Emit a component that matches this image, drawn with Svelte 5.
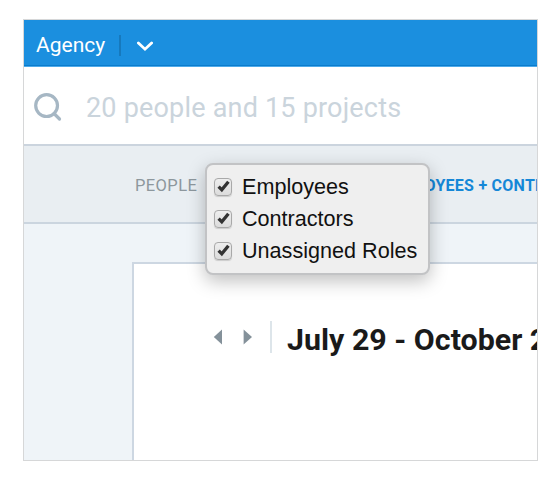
<script lang="ts">
	let query = $state('20 people and 15 projects');
	let filters = $state([
		{ label: 'Employees', checked: true },
		{ label: 'Contractors', checked: true },
		{ label: 'Unassigned Roles', checked: true }
	]);
</script>

<div class="frame">
	<header class="topbar">
		<span class="org">Agency</span>
		<span class="split"></span>
		<svg class="chevron" width="16" height="11" viewBox="0 0 16 11">
			<path d="M1.4 2 L8 8.2 L14.6 2" fill="none" stroke="#fff" stroke-width="2.8" stroke-linecap="round" />
		</svg>
	</header>

	<div class="search">
		<svg width="28" height="29" viewBox="0 0 28 29">
			<circle cx="12.6" cy="12.6" r="10.9" fill="none" stroke="#a6b7c4" stroke-width="3.2" />
			<path d="M20 20.5 L25.5 26" stroke="#a6b7c4" stroke-width="3.2" stroke-linecap="round" />
		</svg>
		<span class="query">{query}</span>
	</div>

	<div class="filterbar">
		<span class="filter-label">PEOPLE</span>
		<span class="filter-value">EMPLOYEES + CONTRACTORS</span>
		<div class="menu">
			{#each filters as filter}
				<button class="option" onclick={() => filter.checked = !filter.checked}>
					<span class="box">
						{#if filter.checked}
							<svg width="13" height="13" viewBox="0 0 13 13">
								<path d="M1.6 6.6 L4.8 9.8 L11.4 1.8" fill="none" stroke="#333" stroke-width="3.3" />
							</svg>
						{/if}
					</span>
					{filter.label}
				</button>
			{/each}
		</div>
	</div>

	<main class="content">
		<section class="card">
			<div class="range">
				<svg width="10" height="16" viewBox="0 0 10 16"><path d="M9 .5 V15.5 L.8 8 Z" fill="#84919a" /></svg>
				<svg class="next" width="10" height="16" viewBox="0 0 10 16"><path d="M.6 .5 V15.5 L9 8 Z" fill="#84919a" /></svg>
				<span class="rule"></span>
				<h2>July 29 - October 27</h2>
			</div>
		</section>
	</main>
</div>

<style>
	:global(body) { background: #fff; }
	.frame { box-sizing: border-box; width: 515px; height: 442px; margin: 19px 0 0 23px; border: 1px solid #d6d7d8; overflow: hidden; display: flex; flex-direction: column; font-family: Roboto, sans-serif; white-space: nowrap; }
	.topbar { box-sizing: border-box; height: 47px; flex: none; display: flex; align-items: center; padding-left: 12px; background: #1b8fdf; border-bottom: 1px solid #4eaaea; box-shadow: inset 0 -1px #0a7ccc; color: #fff; }
	.org { width: 69px; font-size: 21px; line-height: 28px; margin-top: 4px; }
	.split { width: 2px; height: 21px; margin: 4px 16px 0 14px; background: #1679bd; }
	.chevron { margin-top: 6px; }
	.search { box-sizing: border-box; height: 79px; flex: none; display: flex; align-items: center; padding-left: 10px; border-bottom: 2px solid #cbd4de; background: #fff; }
	.search svg { margin-top: 4px; }
	.query { margin: 4px 0 0 24px; font-size: 27px; letter-spacing: 0.2px; color: #cad4dc; }
	.filterbar { box-sizing: border-box; position: relative; height: 78px; flex: none; display: flex; align-items: center; padding-left: 111px; background: #e9eef2; border-bottom: 2px solid #cbd5df; }
	.filter-label { width: 62px; margin: 2px 185px 0 0; font-size: 16.5px; letter-spacing: 0.4px; color: #8d979d; }
	.filter-value { margin-top: 2px; font-size: 16px; font-weight: 700; letter-spacing: 0.25px; color: #1587d7; }
	.menu { box-sizing: border-box; position: absolute; left: 181px; top: 17px; width: 225px; height: 112px; padding: 6px 0 0 7px; background: #efefef; border: 2px solid #c2c3c5; border-radius: 8px; box-shadow: 0 6px 18px rgba(0, 0, 0, 0.25); }
	.option { display: flex; align-items: center; height: 32px; padding: 0; border: none; background: none; font: 21.6px/32px "Liberation Sans", Arial, sans-serif; color: #111; }
	.box { box-sizing: border-box; width: 18px; height: 18px; margin: -1px 10px 0 0; display: flex; align-items: center; justify-content: center; border: 1.5px solid #a9a9a9; border-radius: 4px; background: linear-gradient(#eee, #dcdcdc); box-shadow: 0 1px 1px rgba(0, 0, 0, 0.15); }
	.content { flex: 1; padding: 38px 0 0 108px; background: #eff4f8; }
	.card { height: 100%; background: #fff; border-top: 2px solid #cdd7e2; border-left: 2px solid #cdd7e2; }
	.range { display: flex; align-items: center; padding: 53px 0 0 79px; }
	.range > * { flex: none; }
	.next { margin-left: 20px; }
	.rule { width: 2px; height: 32px; margin: 0 15px 0 17px; background: #dde5ea; }
	h2 { margin: 7px 0 0; font-size: 30.4px; line-height: 32px; font-weight: 700; color: #1a1a1a; }
</style>
